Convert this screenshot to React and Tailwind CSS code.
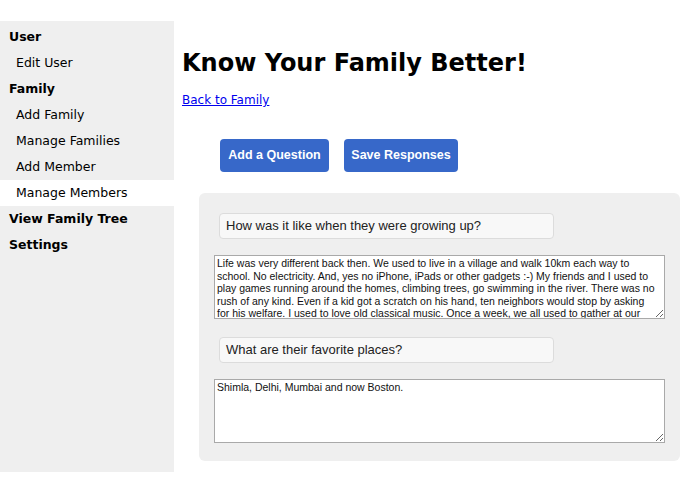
const lifeText =
  "Life was very different back then. We used to live in a village and walk 10km each way to school. No electricity. And, yes no iPhone, iPads or other gadgets :-) My friends and I used to play games running around the homes, climbing trees, go swimming in the river. There was no rush of any kind. Even if a kid got a scratch on his hand, ten neighbors would stop by asking for his welfare. I used to love old classical music. Once a week, we all used to gather at our place and listen to the radio together.";

const navItems = [
  { label: "User", head: true },
  { label: "Edit User" },
  { label: "Family", head: true },
  { label: "Add Family" },
  { label: "Manage Families" },
  { label: "Add Member" },
  { label: "Manage Members", active: true },
  { label: "View Family Tree", head: true },
  { label: "Settings", head: true },
];

const verdana = { fontFamily: "Verdana, 'DejaVu Sans', sans-serif" };

function Sidebar() {
  return (
    <aside className="mt-[21px] h-[451px] w-[174px] shrink-0 bg-[#efefef] pt-[3px]" style={verdana}>
      {navItems.map((item) => (
        <div
          key={item.label}
          className={
            "flex h-[26px] items-center text-[12.5px] text-black " +
            (item.head ? "pl-[9px] font-bold " : "pl-[16px] ") +
            (item.active ? "bg-white" : "")
          }
        >
          {item.label}
        </div>
      ))}
    </aside>
  );
}

function QuestionBlock({ question, answer }) {
  return (
    <div>
      <div className="ml-[5px] flex h-[26px] w-[335px] items-center rounded-[4px] border border-[#dcdcdc] bg-[#f8f8f8] px-[6px] text-[13px] text-[#222]">
        {question}
      </div>
      <textarea
        defaultValue={answer}
        className="mt-[16px] block h-[64px] w-[451px] overflow-hidden border border-[#a9a9a9] bg-white pt-[1px] pr-[5px] pl-[2px] text-[10.5px] leading-[12.6px] text-[#111]"
        style={{ fontFamily: "'Liberation Sans', Arial, sans-serif" }}
      />
    </div>
  );
}

export default function App() {
  return (
    <div className="flex min-h-[494px] bg-white">
      <Sidebar />
      <main className="flex-1 pl-[8px]">
        <h1 className="mt-[48px] text-[24px] leading-[30px] font-bold text-black" style={verdana}>
          Know Your Family Better!
        </h1>
        <a href="#" className="mt-[14px] block w-fit text-[12px] leading-[16px] text-[#0000ee] underline" style={verdana}>
          Back to Family
        </a>
        <div
          className="mt-[31px] ml-[38px] flex gap-[15px]"
          style={{ fontFamily: "'Liberation Sans', Arial, sans-serif" }}
        >
          <button className="h-[33px] w-[109px] rounded-[4px] bg-[#3768c9] text-[12.5px] font-bold text-white">
            Add a Question
          </button>
          <button className="h-[33px] w-[114px] rounded-[4px] bg-[#3768c9] text-[12.5px] font-bold text-white">
            Save Responses
          </button>
        </div>
        <div
          className="mt-[21px] ml-[17px] flex w-[481px] flex-col gap-[18px] rounded-[6px] bg-[#efefef] px-[15px] pt-[20px] pb-[18px]"
          style={{ fontFamily: "'Liberation Sans', Arial, sans-serif" }}
        >
          <QuestionBlock question="How was it like when they were growing up?" answer={lifeText} />
          <QuestionBlock question="What are their favorite places?" answer="Shimla, Delhi, Mumbai and now Boston." />
        </div>
      </main>
    </div>
  );
}
